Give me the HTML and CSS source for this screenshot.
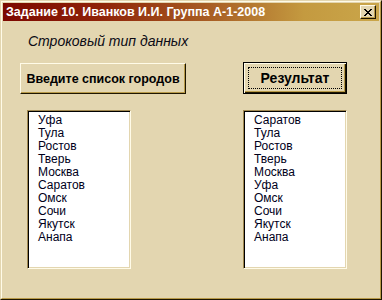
FILE: index.html
```html
<!DOCTYPE html>
<html lang="ru">
<head>
  <meta charset="UTF-8" />
  <title>Задание 10</title>
  <link rel="stylesheet" href="styles.css">
</head>
<body>
  <div class="window">
    <div class="frame">
      <div class="titlebar">
        <span class="title">Задание 10. Иванков И.И. Группа А-1-2008</span>
        <button class="close">
          <svg width="8" height="7" viewBox="0 0 8 7"><path d="M0 0 L7 7 M1 0 L8 7 M7 0 L0 7 M8 0 L1 7" stroke="#000" stroke-width="1" /></svg>
        </button>
      </div>
      <div class="content">
        <div class="caption">Строковый тип данных</div>
        <div class="buttons">
          <button class="btn btn-input">Введите список городов</button>
          <button class="btn btn-default"><span class="focus">Результат</span></button>
        </div>
        <div class="lists">
          <ul class="listbox list-left">
            <li>Уфа</li>
            <li>Тула</li>
            <li>Ростов</li>
            <li>Тверь</li>
            <li>Москва</li>
            <li>Саратов</li>
            <li>Омск</li>
            <li>Сочи</li>
            <li>Якутск</li>
            <li>Анапа</li>
          </ul>
          <ul class="listbox list-right">
            <li>Саратов</li>
            <li>Тула</li>
            <li>Ростов</li>
            <li>Тверь</li>
            <li>Москва</li>
            <li>Уфа</li>
            <li>Омск</li>
            <li>Сочи</li>
            <li>Якутск</li>
            <li>Анапа</li>
          </ul>
        </div>
      </div>
    </div>
  </div>
</body>
</html>
```
FILE: styles.css
```css
/* Classic Windows dialog, olive/beige theme */
body {
  margin: 0;
  font-family: 'Liberation Sans', Arial, sans-serif;
  color: #000;
}
.window {
  width: 382px;
  height: 300px;
  box-sizing: border-box;
  background-color: #e3d6b0;
  border: 1px solid;
  border-color: #e3d6b0 #1e1600 #1e1600 #e3d6b0;
}
.frame {
  height: 100%;
  box-sizing: border-box;
  border: 1px solid;
  border-color: #fffbe8 #b89a48 #b89a48 #fffbe8;
  padding: 1px;
}
.titlebar {
  height: 18px;
  display: flex;
  align-items: center;
  justify-content: space-between;
  padding: 0 3px 0 3px;
  background: linear-gradient(to right, #7c0800 0%, #8e2208 25%, #a85e24 55%, #c49a40 80%, #caa64a 100%);
}
.title {
  color: #fff;
  font-weight: bold;
  font-size: 12.5px;
  white-space: nowrap;
}
.close {
  width: 16px;
  height: 14px;
  padding: 0;
  margin: 0;
  display: flex;
  align-items: center;
  justify-content: center;
  background-color: #e3d6b0;
  border: 1px solid;
  border-color: #fffbe8 #1e1600 #1e1600 #fffbe8;
  box-shadow: inset -1px -1px 0 #b89a48;
}
.caption {
  margin: 12px 0 0 25px;
  height: 16px;
  font-style: italic;
  font-size: 14px;
  line-height: 16px;
  color: #0a0a14;
}
.buttons {
  display: flex;
  align-items: flex-start;
  margin-top: 13px;
}
.btn {
  font-family: 'Liberation Sans', Arial, sans-serif;
  font-weight: bold;
  color: #000;
  background-color: #e3d6b0;
  padding: 0;
  margin: 0;
  box-sizing: border-box;
}
.btn-input {
  margin: 1px 0 0 17px;
  width: 166px;
  height: 31px;
  font-size: 12.5px;
  border: 1px solid;
  border-color: #fffbe8 #1e1600 #1e1600 #fffbe8;
  box-shadow: inset -1px -1px 0 #b89a48;
}
.btn-default {
  margin-left: 57px;
  width: 104px;
  height: 32px;
  font-size: 14px;
  border: 1px solid #000;
  box-shadow: inset 1px 1px 0 #fffbe8, inset -1px -1px 0 #1e1600, inset -2px -2px 0 #b89a48;
  display: flex;
  padding: 4px;
}
.focus {
  flex: 1;
  display: flex;
  align-items: center;
  justify-content: center;
  border: 1px dotted #000;
}
.lists {
  display: flex;
  margin-top: 16px;
}
.listbox {
  list-style: none;
  margin: 0;
  padding: 3px 0 0 10px;
  height: 159px;
  box-sizing: border-box;
  background-color: #fff;
  border: 1px solid;
  border-color: #a08850 #fffbe8 #fffbe8 #a08850;
  box-shadow: inset 1px 1px 0 #000, inset -1px -1px 0 #e3d6b0;
  font-size: 12px;
}
.listbox li {
  height: 13px;
  line-height: 13px;
  color: #00001a;
}
.list-left {
  margin-left: 24px;
  width: 104px;
}
.list-right {
  margin-left: 112px;
  width: 104px;
}
```
